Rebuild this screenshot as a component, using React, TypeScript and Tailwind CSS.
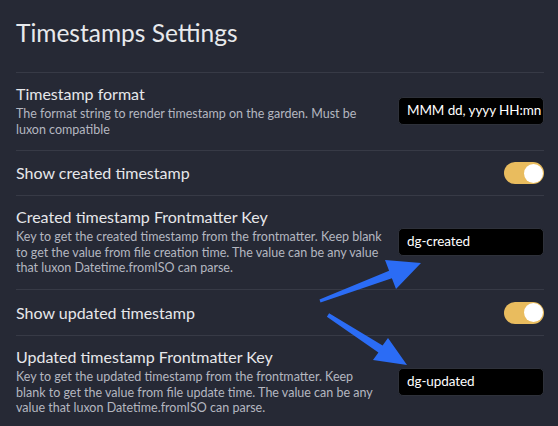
import React from "react";

const font = { fontFamily: "Lato, 'Noto Sans', 'Liberation Sans', sans-serif" };

function Toggle() {
  return (
    <div className="w-[40px] h-[22px] rounded-full bg-[#e9bc5e] flex items-center justify-end pr-[1px] shrink-0">
      <div className="w-[19px] h-[19px] rounded-full bg-white" />
    </div>
  );
}

function Input({ value }: { value: string }) {
  return (
    <div className="w-[146px] h-[28px] shrink-0 rounded-[5px] bg-black border border-[#2e313a] flex items-center pl-[8px] text-[13.5px] tracking-[-0.1px] text-white whitespace-nowrap overflow-hidden">
      {value}
    </div>
  );
}

function Row({
  title,
  lines,
  control,
  cls,
}: {
  title: string;
  lines?: string[];
  control: React.ReactNode;
  cls: string;
}) {
  return (
    <div className={`flex items-center gap-4 border-t border-[#373a46] ${cls}`}>
      <div className="flex-1 min-w-0">
        <div className="text-[16px] leading-[20px] text-[#e6e7ea]">{title}</div>
        {lines && (
          <div className="mt-[2px] text-[12.5px] leading-[15.5px] text-[#b4b7c0]">
            {lines.map((l, i) => (
              <div key={i} className="whitespace-nowrap">
                {l}
              </div>
            ))}
          </div>
        )}
      </div>
      {control}
    </div>
  );
}

export default function App() {
  return (
    <div className="relative w-[558px] h-[426px] overflow-hidden bg-[#262935]" style={font}>
      <div className="pl-4 pr-[14px]">
        <div className="h-[72px] flex items-center">
          <h1 className="text-[24.5px] text-[#e8e9ec] leading-none -mt-[6px]">Timestamps Settings</h1>
        </div>
        <Row
          cls="h-[78px] pb-[2px]"
          title="Timestamp format"
          lines={["The format string to render timestamp on the garden. Must be", "luxon compatible"]}
          control={<Input value="MMM dd, yyyy HH:mn" />}
        />
        <Row cls="h-[45px]" title="Show created timestamp" control={<Toggle />} />
        <Row
          cls="h-[94px] pb-[2px]"
          title="Created timestamp Frontmatter Key"
          lines={[
            "Key to get the created timestamp from the frontmatter. Keep blank",
            "to get the value from file creation time. The value can be any value",
            "that luxon Datetime.fromISO can parse.",
          ]}
          control={<Input value="dg-created" />}
        />
        <Row cls="h-[46px]" title="Show updated timestamp" control={<Toggle />} />
        <Row
          cls="h-[92px]"
          title="Updated timestamp Frontmatter Key"
          lines={[
            "Key to get the updated timestamp from the frontmatter. Keep",
            "blank to get the value from file update time. The value can be any",
            "value that luxon Datetime.fromISO can parse.",
          ]}
          control={<Input value="dg-updated" />}
        />
      </div>
      <svg className="absolute left-0 top-0 pointer-events-none" width="558" height="426" viewBox="0 0 558 426">
        <polygon
          fill="#2b6cf5"
          points="319.5,299.6 389.1,270.8 385,260 421,263 396,289 391.9,278.2 320.5,302.4"
        />
        <polygon
          fill="#2b6cf5"
          points="329.1,313.3 382.6,345.6 388,338 407,365 373,360 378.4,352.4 326.9,316.7"
        />
      </svg>
    </div>
  );
}
